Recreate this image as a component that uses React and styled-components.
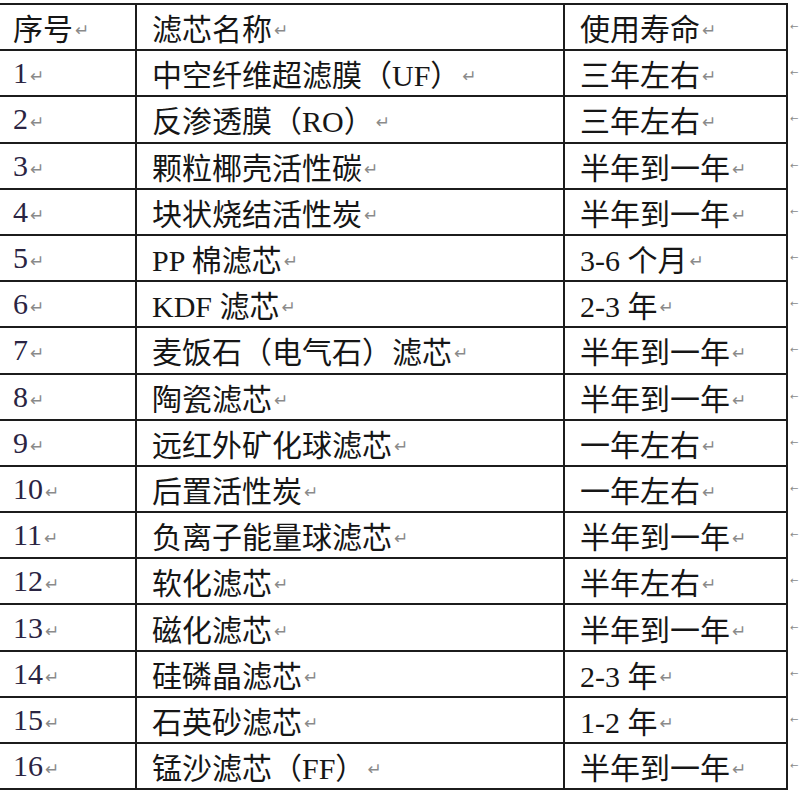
import React from "react";
import styled, { createGlobalStyle } from "styled-components";

const rows = [
  ["1", "中空纤维超滤膜（UF）", "三年左右"],
  ["2", "反渗透膜（RO）", "三年左右"],
  ["3", "颗粒椰壳活性碳", "半年到一年"],
  ["4", "块状烧结活性炭", "半年到一年"],
  ["5", "PP 棉滤芯", "3-6 个月"],
  ["6", "KDF 滤芯", "2-3 年"],
  ["7", "麦饭石（电气石）滤芯", "半年到一年"],
  ["8", "陶瓷滤芯", "半年到一年"],
  ["9", "远红外矿化球滤芯", "一年左右"],
  ["10", "后置活性炭", "一年左右"],
  ["11", "负离子能量球滤芯", "半年到一年"],
  ["12", "软化滤芯", "半年左右"],
  ["13", "磁化滤芯", "半年到一年"],
  ["14", "硅磷晶滤芯", "2-3 年"],
  ["15", "石英砂滤芯", "1-2 年"],
  ["16", "锰沙滤芯（FF）", "半年到一年"],
];

function App() {
  return (
    <>
      <GlobalStyle />
      <Page>
        <Table>
          <Cell pad={13}>
            序号<Mark>↵</Mark>
          </Cell>
          <Cell pad={15}>
            滤芯名称<Mark>↵</Mark>
          </Cell>
          <Cell pad={15}>
            使用寿命<Mark>↵</Mark>
          </Cell>
          {rows.map(([no, name, life]) => (
            <React.Fragment key={no}>
              <Cell pad={13} number>
                {no}
                <Mark>↵</Mark>
              </Cell>
              <Cell pad={15}>
                {name}
                <Mark>↵</Mark>
              </Cell>
              <Cell pad={15}>
                {life}
                <Mark>↵</Mark>
              </Cell>
            </React.Fragment>
          ))}
        </Table>
        <RowEnds>
          {Array.from({ length: rows.length + 1 }).map((_, i) => (
            <RowEnd key={i}>←</RowEnd>
          ))}
        </RowEnds>
      </Page>
    </>
  );
}

export default App;

const GlobalStyle = createGlobalStyle`
  html, body {
    margin: 0;
    padding: 0;
    background: #ffffff;
    overflow: hidden;
  }
`;

const Page = styled.div`
  display: flex;
  align-items: flex-start;
  width: 800px;
  height: 795px;
  padding-top: 3px;
  box-sizing: border-box;
  overflow: hidden;
  background: #fff;
`;

const Table = styled.div`
  display: grid;
  grid-template-columns: 135px 426px 221px;
  grid-auto-rows: 44.2px;
  gap: 2px;
  padding: 2px 2px 2px 0;
  background: #1c1c1c;
  flex-shrink: 0;
`;

const Cell = styled.div`
  display: flex;
  align-items: center;
  background: #fff;
  padding-left: ${(props) => props.pad}px;
  font-family: "Liberation Serif", "Noto Sans CJK SC", serif;
  font-size: 30px;
  color: ${(props) => (props.number ? "#2a2442" : "#161616")};
  white-space: nowrap;
  overflow: hidden;
`;

const Mark = styled.span`
  font-family: "DejaVu Sans", sans-serif;
  font-size: 17px;
  color: #8a8a8a;
  margin-left: 2px;
  margin-top: 6px;
`;

const RowEnds = styled.div`
  display: grid;
  grid-auto-rows: 44.2px;
  gap: 2px;
  padding-top: 2px;
  width: 12px;
  overflow: hidden;
`;

const RowEnd = styled.div`
  display: flex;
  align-items: center;
  padding-left: 2px;
  font-family: "DejaVu Sans", sans-serif;
  font-size: 10px;
  line-height: 1;
  color: #8a8a8a;
  white-space: nowrap;
`;
